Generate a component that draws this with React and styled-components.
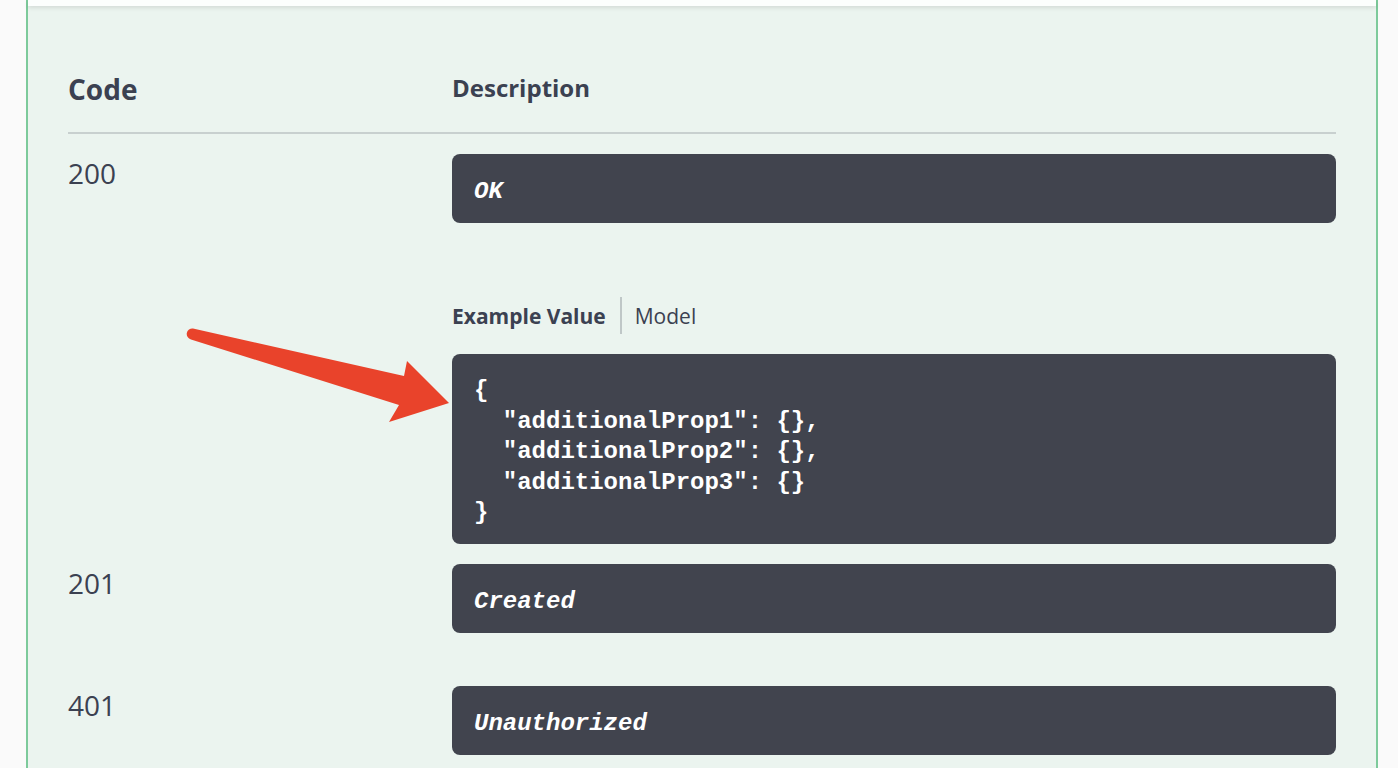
import React from "react";
import styled, { createGlobalStyle } from "styled-components";

const GlobalStyle = createGlobalStyle`
  html, body { margin: 0; padding: 0; background: #fafafa; }
  body { font-family: "Open Sans", "Liberation Sans", sans-serif; color: #3b4151; }
`;

const Page = styled.div`
  position: relative;
  width: 1398px;
  height: 768px;
  overflow: hidden;
  background: #fafafa;
`;

const Panel = styled.section`
  margin: 0 20px 0 26px;
  min-height: 768px;
  background: #ebf4ef;
  border-left: 2px solid #7dca9b;
  border-right: 2px solid #7dca9b;
`;

const SectionBar = styled.div`
  height: 6px;
  background: rgba(255, 255, 255, 0.85);
  box-shadow: 0 2px 4px rgba(0, 0, 0, 0.1);
`;

const Inner = styled.div`
  padding: 40px 40px 0;
`;

const HeadRow = styled.div`
  display: flex;
  align-items: flex-start;
  padding: 24px 0 24px;
  border-bottom: 2px solid rgba(59, 65, 81, 0.2);
`;

const CodeHead = styled.div`
  width: 384px;
  flex: none;
  font-size: 28px;
  line-height: 38px;
  font-weight: 700;
`;

const DescHead = styled.div`
  font-size: 24px;
  line-height: 32px;
  font-weight: 700;
  padding-top: 2px;
`;

const Row = styled.div`
  display: flex;
  align-items: flex-start;
  padding: 20px 0 ${(p) => p.$pb}px;
`;

const Status = styled.div`
  width: 384px;
  flex: none;
  font-size: 28px;
  line-height: 38px;
  font-weight: 400;
`;

const DescCol = styled.div`
  flex: 1;
  min-width: 0;
  display: flex;
  flex-direction: column;
`;

const DescBox = styled.div`
  background: #41444e;
  border-radius: 8px;
  color: #fff;
  font-family: "Liberation Mono", "DejaVu Sans Mono", monospace;
  font-size: 24px;
  font-weight: 700;
  font-style: italic;
  line-height: 29px;
  padding: 23px 22px 17px;
  margin-bottom: 20px;
`;

const TabList = styled.div`
  display: flex;
  align-items: stretch;
  height: 37px;
  margin-top: 54px;
`;

const Tab = styled.div`
  display: flex;
  align-items: center;
  font-size: 21px;
  font-weight: ${(p) => (p.$active ? 700 : 400)};
  padding: ${(p) => (p.$divider ? "0 0 0 13px" : "0 14px 0 0")};
  border-left: ${(p) => (p.$divider ? "2px solid rgba(59,65,81,0.25)" : "none")};
`;

const CodeBlock = styled.pre`
  margin: 20px 0 0;
  background: #41444e;
  border-radius: 8px;
  color: #fff;
  font-family: "Liberation Mono", "DejaVu Sans Mono", monospace;
  font-size: 24px;
  font-weight: 700;
  line-height: 30.5px;
  padding: 22px 22px 15px;
  white-space: pre;
`;

const Arrow = styled.svg`
  position: absolute;
  left: 0;
  top: 0;
  pointer-events: none;
`;

const json = `{
  "additionalProp1": {},
  "additionalProp2": {},
  "additionalProp3": {}
}`;

export default function App() {
  return (
    <>
      <GlobalStyle />
      <Page>
        <Panel>
          <SectionBar />
          <Inner>
            <HeadRow>
              <CodeHead>Code</CodeHead>
              <DescHead>Description</DescHead>
            </HeadRow>
            <Row $pb={0}>
              <Status>200</Status>
              <DescCol>
                <DescBox>OK</DescBox>
                <TabList>
                  <Tab $active>Example Value</Tab>
                  <Tab $divider>Model</Tab>
                </TabList>
                <CodeBlock>{json}</CodeBlock>
              </DescCol>
            </Row>
            <Row $pb={13}>
              <Status>201</Status>
              <DescCol>
                <DescBox>Created</DescBox>
              </DescCol>
            </Row>
            <Row $pb={0}>
              <Status>401</Status>
              <DescCol>
                <DescBox>Unauthorized</DescBox>
              </DescCol>
            </Row>
          </Inner>
        </Panel>
        <Arrow width="1398" height="768" viewBox="0 0 1398 768">
          <path
            d="M 193 328.5 L 404 376 L 407 361 L 449 403 L 389 422 L 399 405 L 191 339.5 A 5.6 5.6 0 0 1 193 328.5 Z"
            fill="#e9432b"
          />
        </Arrow>
      </Page>
    </>
  );
}
